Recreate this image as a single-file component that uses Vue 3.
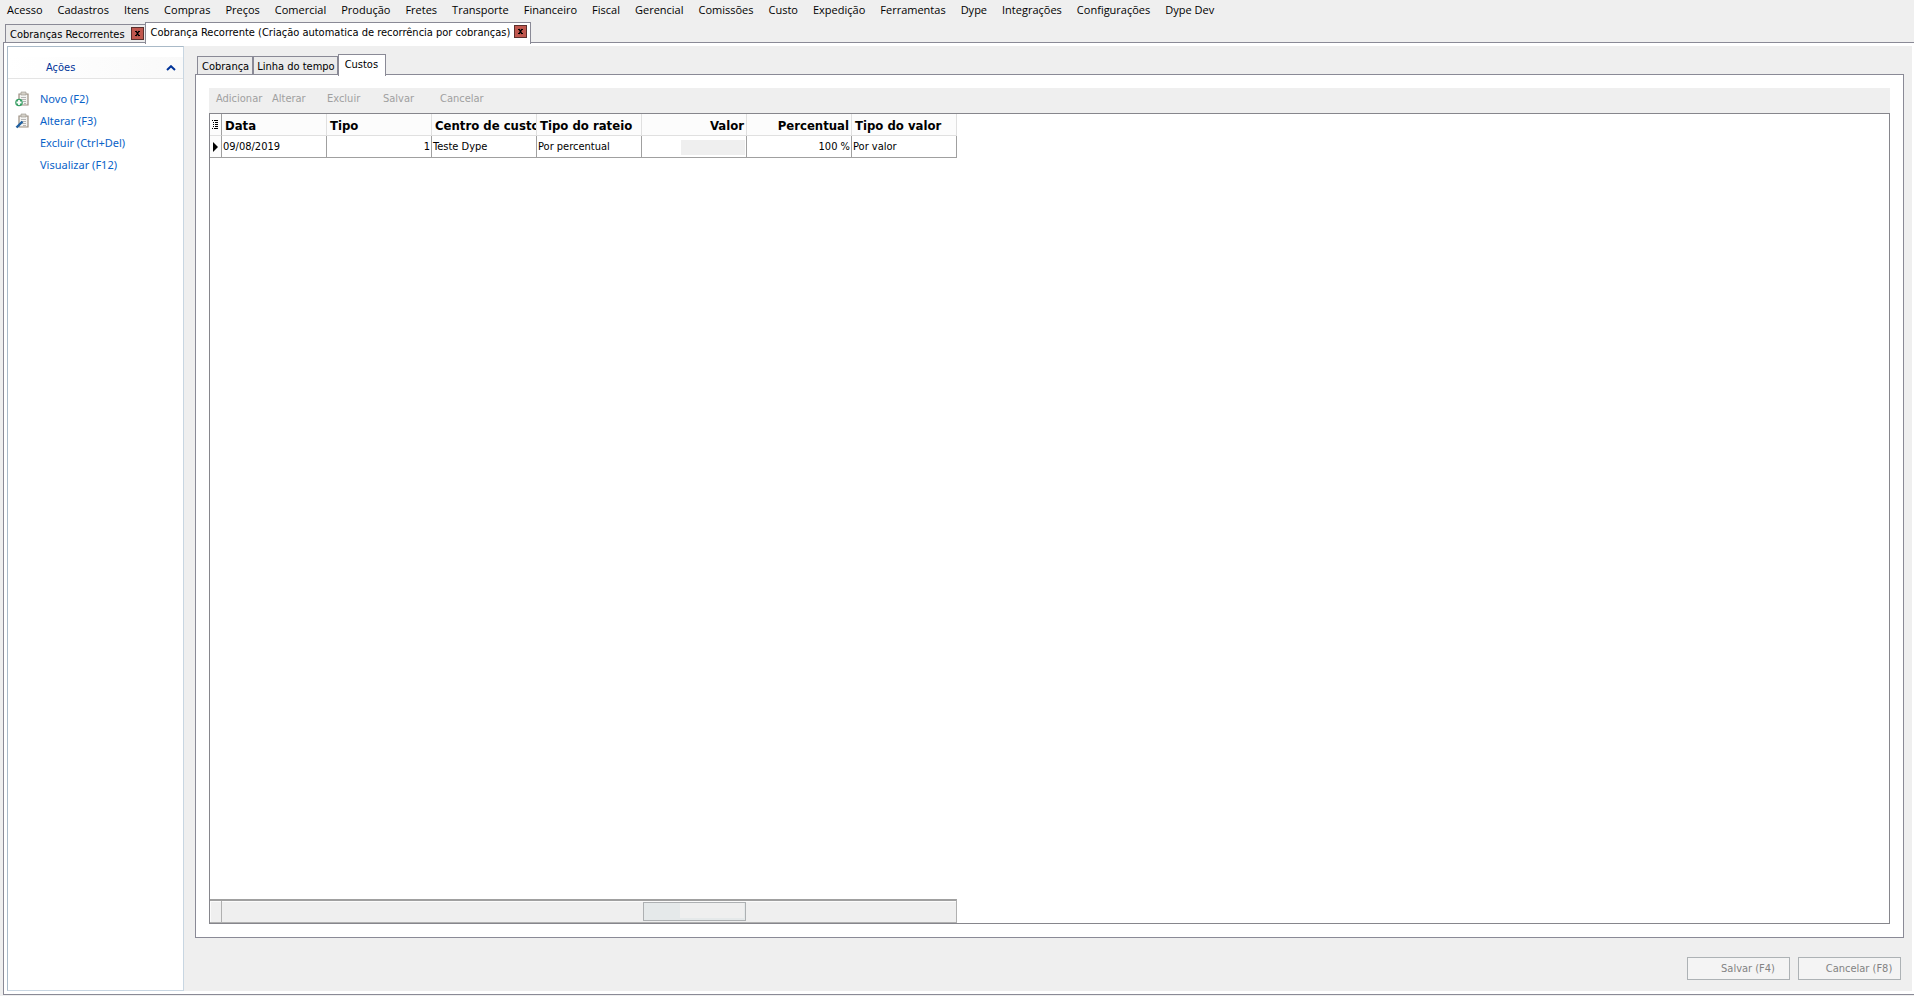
<script setup>
const menu = ['Acesso', 'Cadastros', 'Itens', 'Compras', 'Preços', 'Comercial', 'Produção', 'Fretes', 'Transporte', 'Financeiro', 'Fiscal', 'Gerencial', 'Comissões', 'Custo', 'Expedição', 'Ferramentas', 'Dype', 'Integrações', 'Configurações', 'Dype Dev']
const columns = [
  { label: 'Data' },
  { label: 'Tipo' },
  { label: 'Centro de custo' },
  { label: 'Tipo do rateio' },
  { label: 'Valor', right: true },
  { label: 'Percentual', right: true },
  { label: 'Tipo do valor' },
]
const tools = ['Adicionar', 'Alterar', 'Excluir', 'Salvar', 'Cancelar']
</script>

<template>
  <div class="app">
    <nav class="menu">
      <button v-for="m in menu" :key="m" type="button">{{ m }}</button>
    </nav>

    <div class="tabs main-tabs">
      <div class="tab">
        <button type="button" class="tab-label">Cobranças Recorrentes</button>
        <button type="button" class="close" aria-label="Fechar">
          <svg viewBox="0 0 9 9" width="9" height="9"><path d="M3 2L6 7M6 2L3 7" stroke="#000" stroke-width="1.4" /><path d="M2 2.5h2M5 2.5h2M2 6.5h2M5 6.5h2" stroke="#000" /></svg>
        </button>
      </div>
      <div class="tab active">
        <button type="button" class="tab-label">Cobrança Recorrente (Criação automatica de recorrência por cobranças)</button>
        <button type="button" class="close" aria-label="Fechar">
          <svg viewBox="0 0 9 9" width="9" height="9"><path d="M3 2L6 7M6 2L3 7" stroke="#000" stroke-width="1.4" /><path d="M2 2.5h2M5 2.5h2M2 6.5h2M5 6.5h2" stroke="#000" /></svg>
        </button>
      </div>
    </div>

    <div class="page">
      <aside class="side">
        <button type="button" class="side-head">
          <span>Ações</span>
          <svg viewBox="0 0 10 6" width="10" height="6"><path d="M1 5L5 1.2L9 5" fill="none" stroke="#003399" stroke-width="2" /></svg>
        </button>
        <ul>
          <li>
            <svg viewBox="0 0 15 16" width="15" height="16">
              <path d="M4 3h9v11H4z" fill="#f4f4f2" stroke="#9a8e80" stroke-width="1.2" />
              <path d="M6 1h5v3H6z" fill="#d4d0c8" stroke="#98948c" stroke-width=".6" />
              <path d="M6 6.5h5M6 8.5h5M8 10.5h3M9 12.5h2" stroke="#b4b4b4" />
              <circle cx="4" cy="11.5" r="3.8" fill="#3aa066" />
              <path d="M4 9v5M1.5 11.5h5" stroke="#fff" stroke-width="1.8" />
            </svg>
            <a href="#">Novo (F2)</a>
          </li>
          <li>
            <svg viewBox="0 0 15 16" width="15" height="16">
              <path d="M4 3h9v11H4z" fill="#f4f4f2" stroke="#9a8e80" stroke-width="1.2" />
              <path d="M6 1h5v3H6z" fill="#d4d0c8" stroke="#98948c" stroke-width=".6" />
              <path d="M6 6.5h5M6 8.5h5M7 10.5h4M8 12.5h3" stroke="#b4b4b4" />
              <path d="M1.5 14.5L7.5 8.5" stroke="#1f5fa0" stroke-width="2.4" />
            </svg>
            <a href="#">Alterar (F3)</a>
          </li>
          <li><a href="#">Excluir (Ctrl+Del)</a></li>
          <li><a href="#">Visualizar (F12)</a></li>
        </ul>
      </aside>

      <main class="work">
        <div class="tabs inner-tabs">
          <div class="tab"><button type="button" class="tab-label">Cobrança</button></div>
          <div class="tab"><button type="button" class="tab-label">Linha do tempo</button></div>
          <div class="tab active"><button type="button" class="tab-label">Custos</button></div>
        </div>
        <section class="sheet">
          <div class="toolbar">
            <button v-for="t in tools" :key="t" type="button" disabled>{{ t }}</button>
          </div>
          <div class="grid">
            <table>
              <thead>
                <tr>
                  <th class="ind">
                    <svg viewBox="0 0 7 9" width="7" height="9"><path d="M0 .5h1M2 .5h4M1 2.5h1M3 2.5h3M1 4.5h1M3 4.5h3M1 6.5h1M3 6.5h3M0 8.5h1M2 8.5h4" stroke="#000" shape-rendering="crispEdges" /></svg>
                  </th>
                  <th v-for="c in columns" :key="c.label" :class="{ right: c.right }">{{ c.label }}</th>
                </tr>
              </thead>
              <tbody>
                <tr>
                  <td class="ind"><svg viewBox="0 0 5 10" width="5" height="10"><path d="M0 0L5 5L0 10z" /></svg></td>
                  <td>09/08/2019</td>
                  <td class="right">1</td>
                  <td>Teste Dype</td>
                  <td>Por percentual</td>
                  <td><div class="masked"></div></td>
                  <td class="right">100 %</td>
                  <td>Por valor</td>
                </tr>
              </tbody>
            </table>
            <div class="foot">
              <div class="foot-ind"></div>
              <div class="total"><div></div></div>
            </div>
          </div>
        </section>
        <div class="actions">
          <button type="button" disabled>Salvar (F4)</button>
          <button type="button" disabled>Cancelar (F8)</button>
        </div>
      </main>
    </div>
  </div>
</template>

<style>
html, body, #app { height: 100%; }
body { margin: 0; background: #efefef; }
</style>

<style scoped>
* { box-sizing: border-box; }
.app {
  height: 100%; display: flex; flex-direction: column; overflow: hidden;
  font: 11px/14px "DejaVu Sans Condensed", "DejaVu Sans", sans-serif; color: #000; background: #efefef;
}
button { font: inherit; color: inherit; background: none; border: 0; padding: 0; margin: 0; white-space: nowrap; }
svg { display: block; flex: none; }
.menu { display: flex; gap: 15px; height: 22px; padding: 2px 7px 4px; flex: none; font: 11px/16px "Open Sans", "Noto Sans", sans-serif; }
.tabs { display: flex; align-items: flex-end; height: 20px; flex: none; position: relative; z-index: 1; }
.tab { display: flex; align-items: center; height: 18px; border: 1px solid #8a8a96; border-bottom: 0; background: #ebebeb; }
.tab.active { height: 22px; margin-bottom: -2px; background: #fff; }
.tab-label { padding-top: 2px; }
.main-tabs { padding-left: 5px; }
.main-tabs .tab { padding: 0 1px 0 4px; gap: 6px; border-right: 0; }
.main-tabs .tab.active { padding: 0 3px 4px 5px; gap: 4px; border-right: 1px solid #8a8a96; }
.close { display: grid; place-items: center; width: 13px; height: 13px; background: #c0574e; border: 1px solid #5a2f2c; }
.page { flex: 1; min-height: 0; display: flex; border: 1px solid #8a8a96; border-right: 0; padding: 3px 2px 3px 3px; margin: 0 0 1px 3px; background: #fff; }
.side { width: 177px; flex: none; border: 1px solid #c8d6e2; border-top-color: #a9bac8; border-left-color: #a9bac8; background: #fff; }
.side-head { display: flex; width: 100%; align-items: center; justify-content: space-between; height: 22px; margin-top: 10px; padding: 1px 7px 0 38px; background: linear-gradient(to right, #fff, #f9f9f9); border-bottom: 1px solid #e4e4e4; color: #003399; }
ul { list-style: none; margin: 0; padding: 9px 0 0 7px; }
li { display: grid; grid-template-columns: 25px 1fr; align-items: center; height: 22px; }
li a { grid-column: 2; color: #0a62c8; text-decoration: none; font: 11px/14px "Noto Sans", sans-serif; }
.work { flex: 1; min-width: 0; display: flex; flex-direction: column; background: #efefef; padding: 8px 8px 11px 11px; }
.inner-tabs { padding-left: 2px; }
.inner-tabs .tab { padding: 0 3px 0 4px; }
.inner-tabs .tab + .tab { padding: 0 2px 0 3px; }
.inner-tabs .tab.tab.active { padding: 0 7px 4px 6px; height: 22px; }
.sheet { flex: 1; min-height: 0; display: flex; flex-direction: column; border: 1px solid #8a8a96; background: #fff; padding: 13px; }
.toolbar { display: grid; grid-template-columns: 56px 55px 56px 57px auto; justify-content: start; justify-items: start; height: 25px; padding: 4px 8px 7px 7px; background: #efefef; color: #a0a0a0; flex: none; }
.grid { flex: 1; min-height: 0; display: flex; flex-direction: column; justify-content: space-between; border: 1px solid #86868c; background: #fff; }
table { border-collapse: separate; border-spacing: 0; table-layout: fixed; width: 747px; }
th, td { padding: 1px 1px 0; height: 22px; text-align: left; white-space: nowrap; overflow: hidden; border-right: 1px solid #a0a0a0; border-bottom: 1px solid #a0a0a0; font-weight: normal; }
th { font: bold 13px/16px "DejaVu Sans Condensed", "DejaVu Sans", sans-serif; padding: 2px 2px 0 3px; background: #fcfcfc; border-color: #e0e0e0; }
.ind { width: 12px; padding: 0 0 0 3px; background: #fcfcfc; }
th.ind { padding-left: 2px; border-right-color: #a0a0a0; }
.right { text-align: right; }
.masked { width: 64px; height: 15px; margin-left: auto; background: #efefef; }
.foot { display: flex; width: 747px; height: 24px; border-top: 2px solid #a0a0a0; border-right: 1px solid #b0b0b0; border-bottom: 1px solid #b0b0b0; background: #efefef; box-shadow: inset 1px 1px #fbfbfb; }
.foot-ind { width: 12px; border-right: 1px solid #b0b0b0; }
.total { width: 103px; height: 19px; margin: 1px 0 0 421px; padding: 0 1px 2px 36px; border: 1px solid #adb0b2; background: #e5e9ea; }
.total div { height: 100%; background: #efefef; }
.actions { display: flex; justify-content: flex-end; gap: 8px; padding: 19px 3px 0 0; flex: none; }
.actions button { width: 103px; height: 23px; padding: 1px 0 0 19px; border: 1px solid #adb2b5; background: #f4f4f4; color: #838383; }
</style>
